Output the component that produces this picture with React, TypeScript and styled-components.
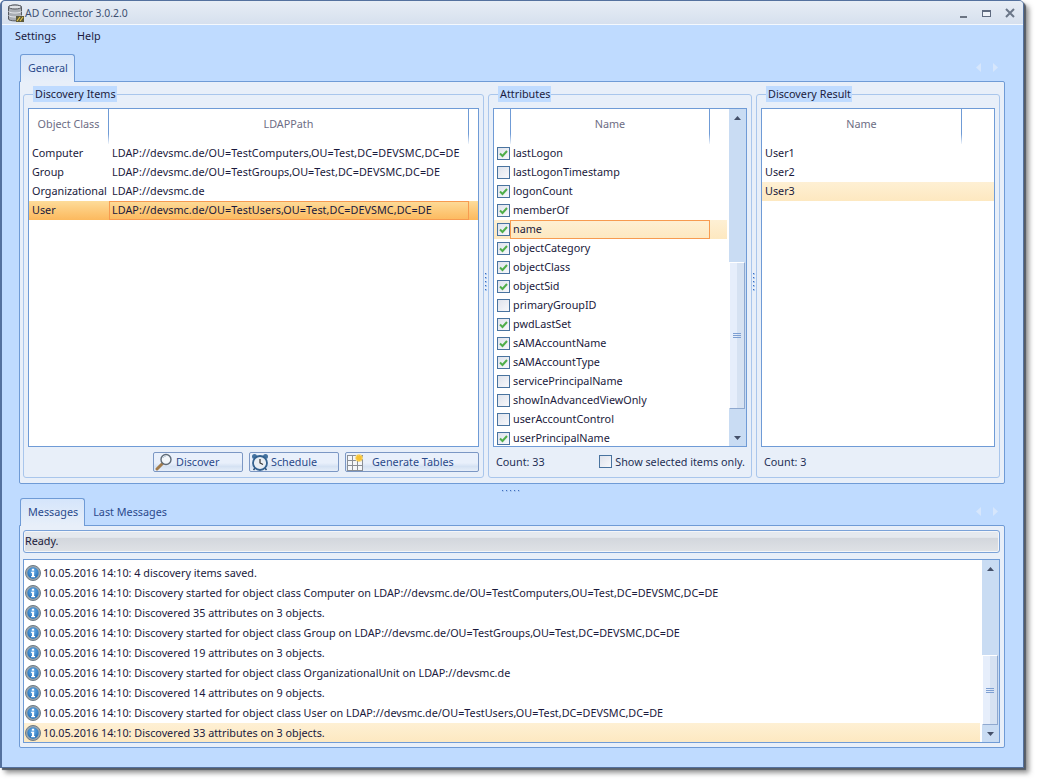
import React from "react";
import styled, { createGlobalStyle } from "styled-components";

const Global = createGlobalStyle`
  html, body { margin: 0; padding: 0; background: #fff; }
  body { font-family: "Noto Sans", "DejaVu Sans", sans-serif; font-size: 10.8px; color: #1a1a3c; }
  * { box-sizing: border-box; }
`;

const Page = styled.div`
  width: 1039px;
  height: 783px;
  overflow: hidden;
`;
const Win = styled.div`
  width: 1024px;
  height: 768px;
  background: #bfdbff;
  border: 1px solid #54719e;
  border-left-width: 2px;
  border-radius: 5px 5px 0 0;
  box-shadow: 2px 2px 1px #555c66, 5px 5px 5px rgba(60, 60, 60, 0.55);
  display: flex;
  flex-direction: column;
`;
const TitleBar = styled.div`
  height: 24px;
  flex: none;
  display: flex;
  align-items: center;
  padding: 0 8px 0 6px;
  background: linear-gradient(#e7edf5, #d6e0ee);
  border-bottom: 1px solid #f4f8fd;
  border-radius: 4px 4px 0 0;
`;
const TitleText = styled.span`
  font-size: 10.4px;
  color: #3d4f70;
`;
const TitleControls = styled.div`
  margin-left: auto;
  display: flex;
  align-items: center;
  gap: 13px;
`;
const MenuBar = styled.div`
  height: 23px;
  flex: none;
  display: flex;
  align-items: center;
  gap: 21px;
  padding: 0 0 2px 13px;
`;
const MenuItem = styled.span`
  color: #1b1b40;
`;
const Content = styled.div`
  flex: 1;
  display: flex;
  flex-direction: column;
  padding: 6px 18px 0 17px;
`;
const TabStrip = styled.div`
  height: 27px;
  flex: none;
  display: flex;
  align-items: flex-end;
  padding-left: 1px;
  position: relative;
  z-index: 1;
`;
const Tab = styled.div<{ $active?: boolean }>`
  height: ${(p) => (p.$active ? 28 : 27)}px;
  margin-bottom: ${(p) => (p.$active ? -1 : 0)}px;
  padding: 0 ${(p) => (p.$active ? 6 : 7)}px 2px ${(p) => (p.$active ? 7 : 7)}px;
  display: flex;
  align-items: center;
  color: #2b4a8c;
  border: 1px solid ${(p) => (p.$active ? "#6f9bd6" : "transparent")};
  border-bottom: none;
  border-radius: 3px 3px 0 0;
  background: ${(p) => (p.$active ? "linear-gradient(#d5e5fb, #e8eff9)" : "transparent")};
`;
const TabNav = styled.div`
  margin-left: auto;
  align-self: center;
  display: flex;
  gap: 12px;
  padding-right: 7px;
`;
const TabPanel = styled.div<{ $h: number }>`
  height: ${(p) => p.$h}px;
  flex: none;
  background: #e8eff9;
  border: 1px solid #6f9bd6;
  border-radius: 0 2px 2px 2px;
  padding: 12px 4px 5px 3px;
  display: flex;
`;
const MsgPanel = styled(TabPanel)`
  padding: 4px 4px 4px 3px;
  flex-direction: column;
`;
const Group = styled.div<{ $w: number }>`
  width: ${(p) => p.$w}px;
  height: 100%;
  flex: none;
  position: relative;
  border: 1px solid #a9c6ec;
  border-radius: 3px;
  padding: 13px 4px 0;
  display: flex;
  flex-direction: column;
`;
const Legend = styled.span`
  position: absolute;
  top: -9px;
  left: 9px;
  padding: 0 1px 0 2px;
  height: 16px;
  line-height: 16px;
  background: #bfdbff;
  color: #1b1b40;
`;
const VSplit = styled.div`
  width: 4px;
  flex: none;
  display: flex;
  flex-direction: column;
  align-items: center;
  justify-content: center;
  gap: 2px;
  padding-bottom: 8px;
`;
const Dot = styled.i`
  display: block;
  width: 2px;
  height: 2px;
  background: linear-gradient(135deg, #3d6cc0 50%, #a9c8f0 50%);
`;
const HSplit = styled.div`
  height: 14px;
  flex: none;
  display: flex;
  align-items: center;
  justify-content: center;
  gap: 2px;
  padding-right: 2px;
`;
const ListBox = styled.div`
  height: 339px;
  flex: none;
  background: #fff;
  border: 1px solid #6f9bd6;
  display: flex;
  overflow: hidden;
`;
const ListMain = styled.div<{ $inset?: number }>`
  flex: 1;
  min-width: 0;
  display: flex;
  flex-direction: column;
  padding-right: ${(p) => p.$inset ?? 0}px;
`;
const HeadRow = styled.div`
  height: 35px;
  flex: none;
  display: flex;
`;
const HeadCell = styled.div<{ $w?: number; $sep?: boolean }>`
  width: ${(p) => (p.$w ? p.$w + "px" : "auto")};
  flex: ${(p) => (p.$w ? "none" : 1)};
  display: flex;
  align-items: center;
  justify-content: center;
  padding-bottom: 6px;
  color: #6d6d84;
  border-right: ${(p) => (p.$sep ? "1px solid" : "none")};
  border-image: linear-gradient(#6f9bd6 70%, #fff) 1;
`;
const Row = styled.div<{ $sel?: "strong" | "soft" }>`
  height: 19px;
  flex: none;
  display: flex;
  align-items: center;
  color: #1a1a3c;
  white-space: nowrap;
  background: ${(p) =>
    p.$sel === "strong"
      ? "linear-gradient(#fddc9a, #fdc877 55%, #fcb95e)"
      : p.$sel === "soft"
      ? "linear-gradient(#fef0d4, #fde8c0)"
      : "transparent"};
`;
const Cell = styled.div<{ $w?: number; $focus?: boolean }>`
  width: ${(p) => (p.$w ? p.$w + "px" : "auto")};
  flex: ${(p) => (p.$w ? "none" : 1)};
  height: 100%;
  display: flex;
  align-items: center;
  padding: 0 0 2px 2px;
  overflow: hidden;
  border: 1px solid ${(p) => (p.$focus ? "#f79b50" : "transparent")};
`;
const PathCell = styled(Cell)`
  letter-spacing: 0.05px;
`;
const Check = styled.span`
  width: 13px;
  height: 13px;
  flex: none;
  display: flex;
  align-items: center;
  justify-content: center;
  border: 1px solid #49739f;
  background: linear-gradient(135deg, #dfe3ec, #f7f8fb);
`;
const CheckCol = styled.div`
  width: 16px;
  flex: none;
  display: flex;
  align-items: center;
  padding-left: 3px;
`;
const ScrollBar = styled.div`
  width: 17px;
  flex: none;
  background: #c9dcf3;
  display: flex;
  flex-direction: column;
  align-items: stretch;
`;
const Arrow = styled.div`
  height: 17px;
  flex: none;
  display: flex;
  align-items: center;
  justify-content: center;
`;
const Track = styled.div`
  flex: 1;
  min-height: 0;
  display: flex;
  flex-direction: column;
  justify-content: flex-end;
`;
const Thumb = styled.div<{ $h: number; $b: number }>`
  height: ${(p) => p.$h}px;
  margin: 0 1px ${(p) => p.$b}px 0;
  flex: none;
  border: 1px solid #8ea8cf;
  border-top-color: #fff;
  border-left-color: #fff;
  background: linear-gradient(90deg, #e6eefb 0 50%, #d6e2f2 50% 100%);
  display: flex;
  flex-direction: column;
  align-items: center;
  justify-content: center;
  gap: 1px;
`;
const Grip = styled.i`
  display: block;
  width: 8px;
  height: 1px;
  background: #7d9fd2;
`;
const Footer = styled.div`
  flex: 1;
  display: flex;
  align-items: center;
  padding: 0 2px 1px 0;
`;
const ButtonBar = styled(Footer)`
  justify-content: flex-end;
  gap: 6px;
  padding: 0;
  margin-bottom: 1px;
`;
const Btn = styled.div<{ $w: number }>`
  width: ${(p) => p.$w}px;
  height: 20px;
  border: 1px solid #7b97c4;
  border-radius: 2px;
  background: linear-gradient(#e9f0fb 55%, #d5e2f3 75%, #e6eef9);
  display: flex;
  align-items: center;
  color: #2a4a8a;
  padding-left: 1px;
`;
const BtnLabel = styled.span<{ $pad: number }>`
  margin-left: ${(p) => p.$pad}px;
`;
const CountText = styled.span`
  margin-left: 3px;
  color: #1f2f55;
`;
const FooterCheck = styled.label`
  margin-left: auto;
  display: flex;
  align-items: center;
  gap: 3px;
  color: #1f2f55;
  white-space: nowrap;
`;
const StatusBar = styled.div`
  height: 23px;
  flex: none;
  display: flex;
  align-items: center;
  padding: 0 0 2px 1px;
  border: 1px solid #7aa2d8;
  border-radius: 3px;
  background: linear-gradient(#e5e9ee 0 30%, #d3d7dd 35%, #dfe2e6);
  box-shadow: inset 0 0 0 1px #f4f6f9;
  color: #1a1a3c;
`;
const MsgBox = styled.div`
  margin-top: 6px;
  height: 184px;
  flex: none;
  background: #fff;
  border: 1px solid #6f9bd6;
  display: flex;
  overflow: hidden;
`;
const MsgRows = styled.div`
  flex: 1;
  min-width: 0;
  padding: 3px 2px 0 0;
  display: flex;
  flex-direction: column;
`;
const MsgRow = styled.div<{ $sel?: boolean }>`
  height: 20px;
  flex: none;
  display: flex;
  align-items: center;
  gap: 2px;
  padding-left: 1px;
  white-space: nowrap;
  color: #1a1a3c;
  background: ${(p) => (p.$sel ? "linear-gradient(#fef0d4, #fde8c0)" : "transparent")};
`;
const MsgText = styled.span`
  padding-bottom: 2px;
`;

const DbIcon = () => (
  <svg width="17" height="20" viewBox="2 0 17 20">
    <path d="M2.5 4 C2.5 1.5 15.5 1.5 15.5 4 V16 C15.5 18.5 2.5 18.5 2.5 16 Z" fill="#a9adb3" stroke="#55595f" strokeWidth="1" />
    <ellipse cx="9" cy="4" rx="6.5" ry="2" fill="#dfe2e6" stroke="#55595f" />
    <path d="M2.5 8.5 C4.5 10.5 13.5 10.5 15.5 8.5 M2.5 12.5 C4.5 14.5 13.5 14.5 15.5 12.5" fill="none" stroke="#e8eaee" />
    <rect x="10" y="13" width="8" height="6" fill="#5d5a3a" />
    <path d="M11 18 L14 14 M14 18 L17 14" stroke="#e7c64a" strokeWidth="1.2" />
  </svg>
);
const MinIcon = () => (
  <svg width="9" height="10" viewBox="0 0 9 10">
    <rect x="0" y="8" width="7" height="2" fill="#6b7483" />
  </svg>
);
const MaxIcon = () => (
  <svg width="10" height="10" viewBox="0 0 10 10">
    <rect x="0.5" y="2.5" width="8" height="6" fill="#eef2f8" stroke="#5f6b80" />
    <rect x="0" y="2" width="9" height="2" fill="#5f6b80" />
  </svg>
);
const CloseIcon = () => (
  <svg width="10" height="10" viewBox="0 0 10 10">
    <path d="M1 1 L9 9 M9 1 L1 9" stroke="#6a7688" strokeWidth="2" />
  </svg>
);
const NavL = () => (
  <svg width="5" height="9" viewBox="0 0 5 9">
    <path d="M5 0 V9 L0 4.5 Z" fill="#d6e6fc" />
  </svg>
);
const NavR = () => (
  <svg width="5" height="9" viewBox="0 0 5 9">
    <path d="M0 0 V9 L5 4.5 Z" fill="#d6e6fc" />
  </svg>
);
const UpArrow = () => (
  <svg width="7" height="4" viewBox="0 0 7 4">
    <path d="M3.5 0 L7 4 H0 Z" fill="#445069" />
  </svg>
);
const DownArrow = () => (
  <svg width="7" height="4" viewBox="0 0 7 4">
    <path d="M0 0 H7 L3.5 4 Z" fill="#445069" />
  </svg>
);
const Tick = () => (
  <svg width="9" height="9" viewBox="0 0 9 9">
    <path d="M1 4.5 L3.5 7 L8 2" fill="none" stroke="#4fae4a" strokeWidth="2" />
  </svg>
);
const InfoIcon = () => (
  <svg width="16" height="16" viewBox="0 0 17 17" style={{ flex: "none" }}>
    <defs>
      <radialGradient id="ig" cx="50%" cy="35%" r="65%">
        <stop offset="0" stopColor="#6db0ea" />
        <stop offset="1" stopColor="#1f6db5" />
      </radialGradient>
    </defs>
    <circle cx="8.5" cy="8.5" r="8" fill="#9aa5ae" stroke="#6a7680" />
    <circle cx="8.5" cy="8.5" r="6" fill="url(#ig)" />
    <rect x="7.3" y="4" width="2.4" height="2" fill="#fff" />
    <path d="M6.5 7.2 H9.7 V11.6 H10.7 V13 H6.5 V11.6 H7.4 V8.5 H6.5 Z" fill="#fff" />
  </svg>
);
const SearchIcon = () => (
  <svg width="18" height="18" viewBox="0 0 18 18" style={{ flex: "none" }}>
    <path d="M7.5 10.5 L2 16" stroke="#a27c4c" strokeWidth="3" strokeLinecap="round" />
    <circle cx="11" cy="6.5" r="5" fill="#f3f7fb" stroke="#5f6b78" strokeWidth="1.4" />
    <path d="M8 5 A4 4 0 0 1 11 3" fill="none" stroke="#b5c6d8" />
  </svg>
);
const ClockIcon = () => (
  <svg width="18" height="18" viewBox="0 0 18 18" style={{ flex: "none" }}>
    <circle cx="3.5" cy="3.5" r="2.5" fill="#44729f" />
    <circle cx="14.5" cy="3.5" r="2.5" fill="#44729f" />
    <path d="M4 15 L2.5 17 M14 15 L15.5 17" stroke="#2f4e70" strokeWidth="1.5" />
    <circle cx="9" cy="10" r="7" fill="#e9eef3" stroke="#33618f" strokeWidth="1.8" />
    <path d="M9 6 V10 L12 11.5" fill="none" stroke="#333" strokeWidth="1.2" />
  </svg>
);
const TableIcon = () => (
  <svg width="18" height="18" viewBox="0 0 18 18" style={{ flex: "none" }}>
    <rect x="0.5" y="2.5" width="15" height="15" fill="#f4f6f9" stroke="#8a8f96" />
    <path d="M5.5 2.5 V17.5 M10.5 2.5 V17.5 M0.5 7.5 H15.5 M0.5 12.5 H15.5" stroke="#8a8f96" fill="none" />
    <circle cx="12" cy="5" r="3.4" fill="#f6c234" stroke="#f8df8a" strokeWidth="1.4" strokeDasharray="1.4 1" />
  </svg>
);

const dots = (n: number) => Array.from({ length: n }, (_, i) => <Dot key={i} />);

const items = [
  ["Computer", "LDAP://devsmc.de/OU=TestComputers,OU=Test,DC=DEVSMC,DC=DE"],
  ["Group", "LDAP://devsmc.de/OU=TestGroups,OU=Test,DC=DEVSMC,DC=DE"],
  ["Organizational", "LDAP://devsmc.de"],
  ["User", "LDAP://devsmc.de/OU=TestUsers,OU=Test,DC=DEVSMC,DC=DE"],
];
const attrs: [string, boolean][] = [
  ["lastLogon", true],
  ["lastLogonTimestamp", false],
  ["logonCount", true],
  ["memberOf", true],
  ["name", true],
  ["objectCategory", true],
  ["objectClass", true],
  ["objectSid", true],
  ["primaryGroupID", false],
  ["pwdLastSet", true],
  ["sAMAccountName", true],
  ["sAMAccountType", true],
  ["servicePrincipalName", false],
  ["showInAdvancedViewOnly", false],
  ["userAccountControl", false],
  ["userPrincipalName", true],
];
const messages = [
  "10.05.2016 14:10: 4 discovery items saved.",
  "10.05.2016 14:10: Discovery started for object class Computer on LDAP://devsmc.de/OU=TestComputers,OU=Test,DC=DEVSMC,DC=DE",
  "10.05.2016 14:10: Discovered 35 attributes on 3 objects.",
  "10.05.2016 14:10: Discovery started for object class Group on LDAP://devsmc.de/OU=TestGroups,OU=Test,DC=DEVSMC,DC=DE",
  "10.05.2016 14:10: Discovered 19 attributes on 3 objects.",
  "10.05.2016 14:10: Discovery started for object class OrganizationalUnit on LDAP://devsmc.de",
  "10.05.2016 14:10: Discovered 14 attributes on 9 objects.",
  "10.05.2016 14:10: Discovery started for object class User on LDAP://devsmc.de/OU=TestUsers,OU=Test,DC=DEVSMC,DC=DE",
  "10.05.2016 14:10: Discovered 33 attributes on 3 objects.",
];

const Scroll = ({ h, b }: { h: number; b: number }) => (
  <ScrollBar>
    <Arrow><UpArrow /></Arrow>
    <Track>
      <Thumb $h={h} $b={b}>
        <Grip /><Grip /><Grip />
      </Thumb>
    </Track>
    <Arrow><DownArrow /></Arrow>
  </ScrollBar>
);

export default function App() {
  return (
    <Page>
      <Global />
      <Win>
        <TitleBar>
          <DbIcon />
          <TitleText>AD Connector 3.0.2.0</TitleText>
          <TitleControls>
            <MinIcon />
            <MaxIcon />
            <CloseIcon />
          </TitleControls>
        </TitleBar>
        <MenuBar>
          <MenuItem>Settings</MenuItem>
          <MenuItem>Help</MenuItem>
        </MenuBar>
        <Content>
          <TabStrip>
            <Tab $active>General</Tab>
            <TabNav><NavL /><NavR /></TabNav>
          </TabStrip>
          <TabPanel $h={403}>
            <Group $w={461}>
              <Legend>Discovery Items</Legend>
              <ListBox>
                <ListMain>
                  <HeadRow>
                    <HeadCell $w={80} $sep>Object Class</HeadCell>
                    <HeadCell $w={360} $sep>LDAPPath</HeadCell>
                  </HeadRow>
                  {items.map(([a, b], i) => (
                    <Row key={a} $sel={i === 3 ? "strong" : undefined}>
                      <Cell $w={80}>{a}</Cell>
                      <PathCell $w={360} $focus={i === 3}>{b}</PathCell>
                    </Row>
                  ))}
                </ListMain>
              </ListBox>
              <ButtonBar>
                <Btn $w={90}><SearchIcon /><BtnLabel $pad={3}>Discover</BtnLabel></Btn>
                <Btn $w={90}><ClockIcon /><BtnLabel $pad={2}>Schedule</BtnLabel></Btn>
                <Btn $w={134}><TableIcon /><BtnLabel $pad={7}>Generate Tables</BtnLabel></Btn>
              </ButtonBar>
            </Group>
            <VSplit>{dots(5)}</VSplit>
            <Group $w={264}>
              <Legend>Attributes</Legend>
              <ListBox>
                <ListMain $inset={2}>
                  <HeadRow>
                    <HeadCell $w={17} $sep />
                    <HeadCell $w={199} $sep>Name</HeadCell>
                  </HeadRow>
                  {attrs.map(([n, on], i) => (
                    <Row key={n} $sel={i === 4 ? "soft" : undefined}>
                      <CheckCol><Check>{on && <Tick />}</Check></CheckCol>
                      <Cell $w={200} $focus={i === 4}>{n}</Cell>
                    </Row>
                  ))}
                </ListMain>
                <Scroll h={147} b={20} />
              </ListBox>
              <Footer>
                <CountText>Count: 33</CountText>
                <FooterCheck>
                  <Check />
                  Show selected items only.
                </FooterCheck>
              </Footer>
            </Group>
            <VSplit>{dots(5)}</VSplit>
            <Group $w={244}>
              <Legend>Discovery Result</Legend>
              <ListBox>
                <ListMain>
                  <HeadRow>
                    <HeadCell $w={200} $sep>Name</HeadCell>
                  </HeadRow>
                  {["User1", "User2", "User3"].map((u, i) => (
                    <Row key={u} $sel={i === 2 ? "soft" : undefined}>
                      <Cell>{u}</Cell>
                    </Row>
                  ))}
                </ListMain>
              </ListBox>
              <Footer>
                <CountText>Count: 3</CountText>
              </Footer>
            </Group>
          </TabPanel>
          <HSplit>{dots(5)}</HSplit>
          <TabStrip>
            <Tab $active>Messages</Tab>
            <Tab>Last Messages</Tab>
            <TabNav><NavL /><NavR /></TabNav>
          </TabStrip>
          <MsgPanel $h={223}>
            <StatusBar>Ready.</StatusBar>
            <MsgBox>
              <MsgRows>
                {messages.map((m, i) => (
                  <MsgRow key={i} $sel={i === 8}>
                    <InfoIcon />
                    <MsgText>{m}</MsgText>
                  </MsgRow>
                ))}
              </MsgRows>
              <Scroll h={70} b={0} />
            </MsgBox>
          </MsgPanel>
        </Content>
      </Win>
    </Page>
  );
}
